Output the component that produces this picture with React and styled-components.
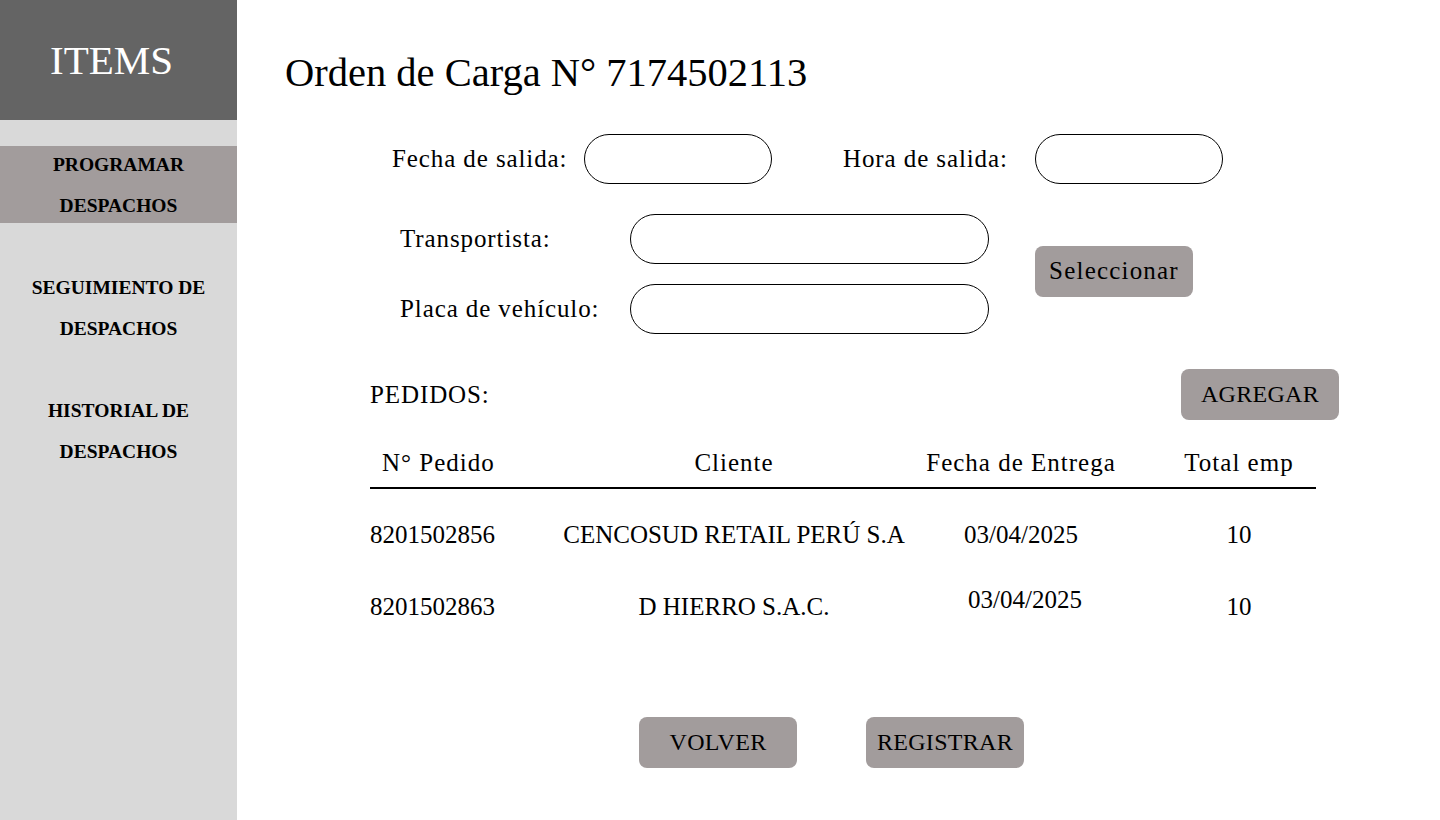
import React from "react";
import styled, { createGlobalStyle } from "styled-components";

const pedidos = [
  { id: "8201502856", cliente: "CENCOSUD RETAIL PERÚ S.A", fecha: "03/04/2025", total: "10" },
  { id: "8201502863", cliente: "D HIERRO S.A.C.", fecha: "03/04/2025", total: "10", lift: true },
];

const App = () => {
  return (
    <Page>
      <GlobalStyle />
      <Sidebar>
        <SidebarHeader>ITEMS</SidebarHeader>
        <Nav>
          <NavItem $active>
            PROGRAMAR
            <br />
            DESPACHOS
          </NavItem>
          <NavItem>
            SEGUIMIENTO DE
            <br />
            DESPACHOS
          </NavItem>
          <NavItem>
            HISTORIAL DE
            <br />
            DESPACHOS
          </NavItem>
        </Nav>
      </Sidebar>

      <Main>
        <Title>Orden de Carga N° 7174502113</Title>

        <DateRow>
          <Field>
            <Label>Fecha de salida:</Label>
            <Input />
          </Field>
          <Field>
            <Label>Hora de salida:</Label>
            <Input />
          </Field>
        </DateRow>

        <CarrierBlock>
          <CarrierGrid>
            <Label>Transportista:</Label>
            <Input $wide />
            <Label>Placa de vehículo:</Label>
            <Input $wide />
          </CarrierGrid>
          <Button $side>Seleccionar</Button>
        </CarrierBlock>

        <PedidosBar>
          <Label>PEDIDOS:</Label>
          <Button>AGREGAR</Button>
        </PedidosBar>

        <Table>
          <HeaderRow>
            <HeadCell $first>N° Pedido</HeadCell>
            <HeadCell>Cliente</HeadCell>
            <HeadCell>Fecha de Entrega</HeadCell>
            <HeadCell $last>Total emp</HeadCell>
          </HeaderRow>
          <Body>
            {pedidos.map(p => (
              <Row key={p.id}>
                <Cell $first>{p.id}</Cell>
                <Cell>{p.cliente}</Cell>
                <Cell $lift={p.lift}>{p.fecha}</Cell>
                <Cell $last>{p.total}</Cell>
              </Row>
            ))}
          </Body>
        </Table>

        <Actions>
          <Button>VOLVER</Button>
          <Button>REGISTRAR</Button>
        </Actions>
      </Main>
    </Page>
  );
};

const GlobalStyle = createGlobalStyle`
  html, body {
    margin: 0;
    padding: 0;
    background: #ffffff;
    font-family: "Liberation Serif", "Times New Roman", serif;
    color: #000;
  }
`;

const Page = styled.div`
  display: flex;
  width: 1440px;
  height: 820px;
  overflow: hidden;
`;

const Sidebar = styled.aside`
  width: 237px;
  flex-shrink: 0;
  background: #d9d9d9;
  display: flex;
  flex-direction: column;
`;

const SidebarHeader = styled.div`
  height: 120px;
  background: #646464;
  color: #ffffff;
  font-size: 41px;
  display: flex;
  align-items: center;
  justify-content: center;
  padding-right: 14px;
`;

const Nav = styled.nav`
  display: flex;
  flex-direction: column;
  gap: 46px;
  margin-top: 26px;
`;

const NavItem = styled.div`
  height: 77px;
  display: flex;
  align-items: center;
  justify-content: center;
  text-align: center;
  font-size: 19.5px;
  font-weight: bold;
  line-height: 41px;
  background: ${p => (p.$active ? "#a29c9c" : "transparent")};
`;

const Main = styled.main`
  flex: 1;
  padding: 49px 0 0 48px;
`;

const Title = styled.h1`
  margin: 0;
  font-size: 40.5px;
  font-weight: normal;
  line-height: 48px;
`;

const Label = styled.span`
  font-size: 25px;
  letter-spacing: 0.9px;
`;

const Input = styled.input`
  box-sizing: border-box;
  width: ${p => (p.$wide ? "359px" : "188px")};
  height: 50px;
  border: 1px solid #000;
  border-radius: 25px;
  background: #fff;
  outline: none;
  padding: 0 18px;
  font-family: inherit;
  font-size: 20px;
`;

const DateRow = styled.div`
  display: flex;
  gap: 71px;
  margin: 37px 0 0 107px;
`;

const Field = styled.label`
  display: grid;
  grid-template-columns: 192px 188px;
  align-items: center;
`;

const CarrierBlock = styled.div`
  display: flex;
  align-items: center;
  margin: 30px 0 0 115px;
`;

const CarrierGrid = styled.div`
  display: grid;
  grid-template-columns: 230px 359px;
  row-gap: 20px;
  align-items: center;
`;

const Button = styled.button`
  box-sizing: border-box;
  width: 158px;
  height: 51px;
  margin-left: ${p => (p.$side ? "46px" : "0")};
  margin-top: ${p => (p.$side ? "-6px" : "0")};
  border: none;
  border-radius: 8px;
  background: #a29c9c;
  color: #000;
  font-family: inherit;
  font-size: ${p => (p.$side ? "25px" : "24px")};
  letter-spacing: ${p => (p.$side ? "1.2px" : "0.3px")};
  padding: 0;
  cursor: pointer;
`;

const PedidosBar = styled.div`
  width: 969px;
  display: flex;
  align-items: center;
  justify-content: space-between;
  margin: 35px 0 0 85px;
`;

const Table = styled.div`
  width: 946px;
  margin: 28px 0 0 85px;
`;

const columns = `
  display: grid;
  grid-template-columns: 190px 348px 226px 182px;
`;

const HeaderRow = styled.div`
  ${columns}
  padding-bottom: 9px;
  border-bottom: 2px solid #000;
`;

const HeadCell = styled.div`
  font-size: 25px;
  line-height: 30px;
  letter-spacing: 1px;
  text-align: ${p => (p.$first ? "left" : "center")};
  padding-left: ${p => (p.$first ? "12px" : p.$last ? "28px" : "0")};
`;

const Body = styled.div`
  margin-top: 10px;
`;

const Row = styled.div`
  ${columns}
  height: 72px;
  align-items: center;
`;

const Cell = styled.div`
  font-size: 25px;
  line-height: 30px;
  text-align: ${p => (p.$first ? "left" : "center")};
  padding-left: ${p => (p.$last ? "28px" : p.$lift ? "8px" : "0")};
  margin-bottom: ${p => (p.$lift ? "14px" : "0")};
`;

const Actions = styled.div`
  display: flex;
  gap: 69px;
  margin: 74px 0 0 354px;
`;

export default App;
